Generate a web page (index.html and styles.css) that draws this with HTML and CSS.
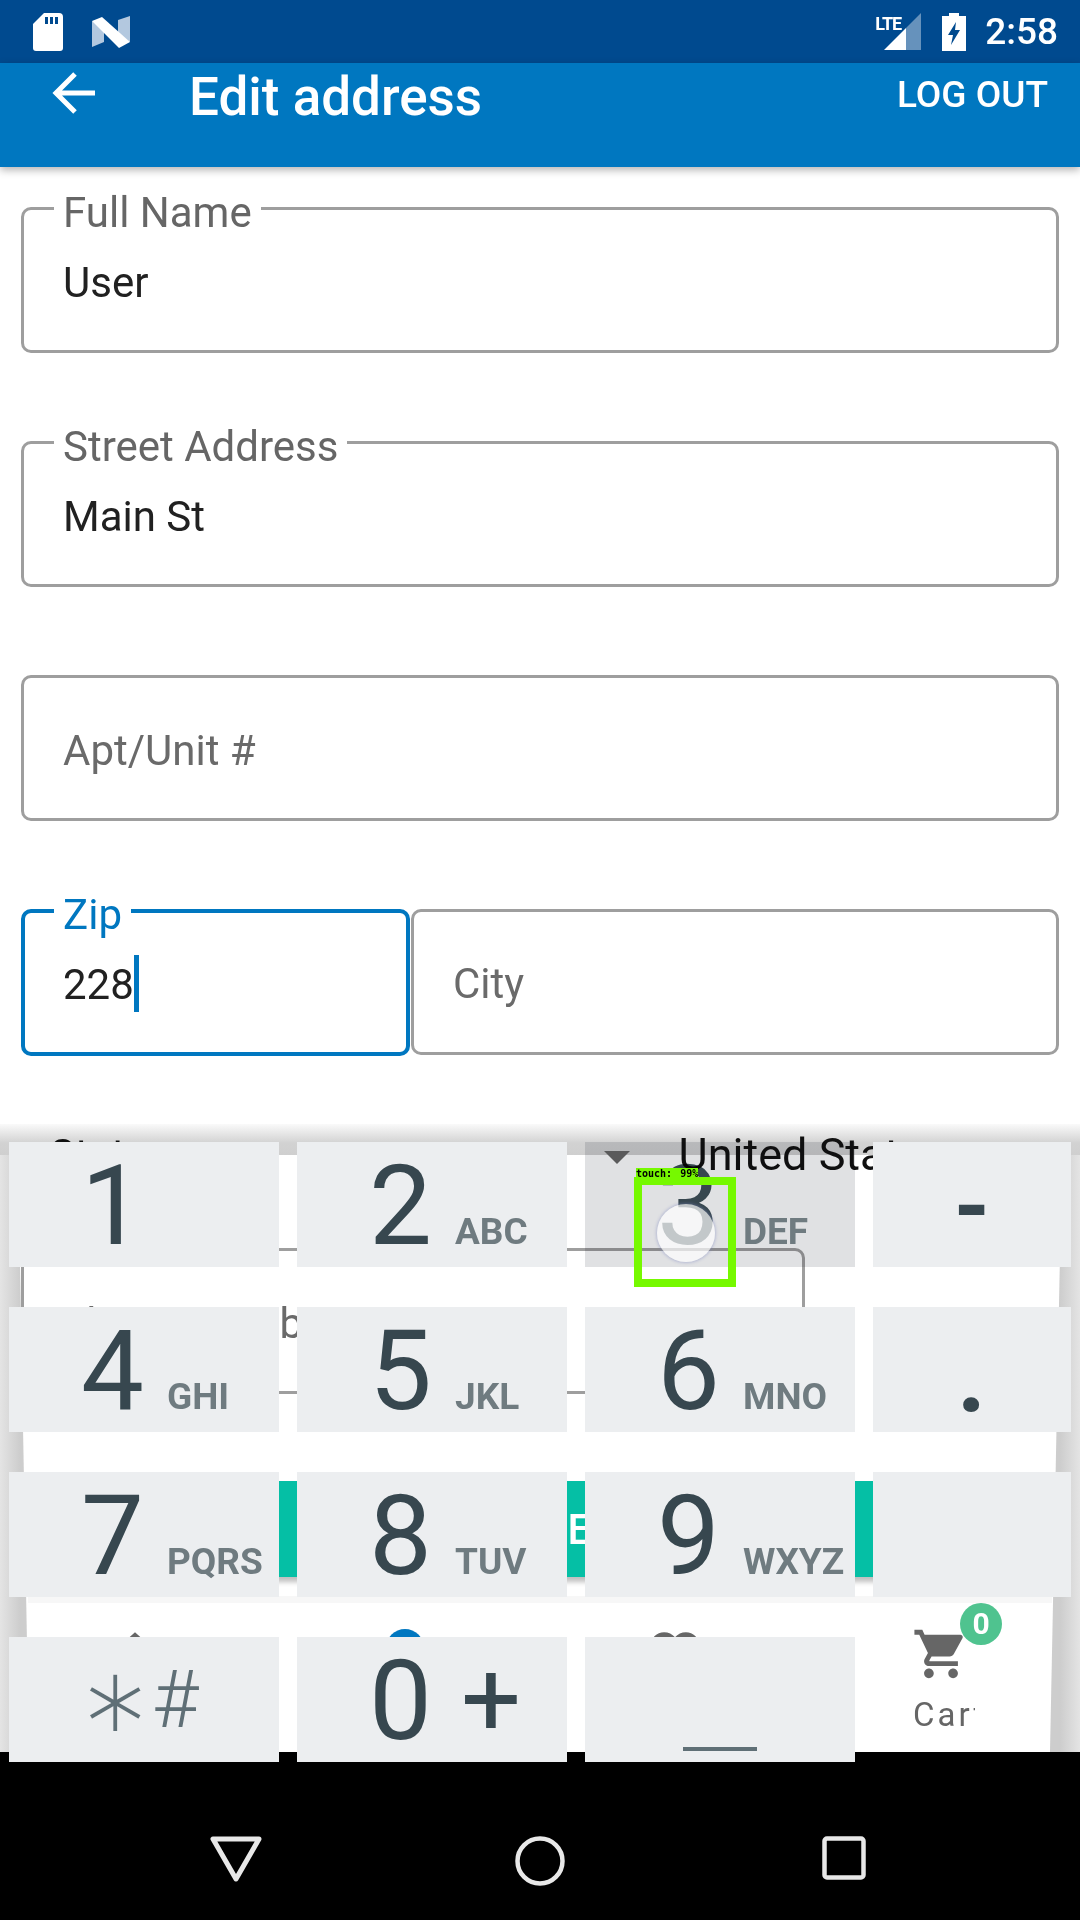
FILE: index.html
```html
<!DOCTYPE html>
<html lang="en">
<head>
    <meta charset="UTF-8">
    <meta name="viewport" content="width=device-width, initial-scale=1.0">
    <title>Edit address</title>
    <link rel="stylesheet" href="styles.css">
</head>
<body>
    <div class="screen">
        <div class="status-bar">
            <svg class="sd-icon" width="30" height="38" viewBox="0 0 30 38">
                <path fill="#fff" d="M11 0H26a4 4 0 0 1 4 4V35a3 3 0 0 1-3 3H3a3 3 0 0 1-3-3V11Z"/>
                <path fill="#004a8f" d="M12 4h3v7h-3zM17 4h3v7h-3zM22 4h3v7h-3z"/>
            </svg>
            <svg class="n-icon" width="38" height="32" viewBox="0 0 38 32">
                <path fill="#b3c8df" d="M0 5L12 11V26L0 31ZM38 0V26L26 20V4Z"/>
                <path fill="#fff" d="M0 5L10 1L38 26L27 32Z"/>
            </svg>
            <div class="status-right">
                <div class="network">
                    <span class="lte">LTE</span>
                    <svg width="37" height="37" viewBox="0 0 37 37">
                        <path fill="#fff" fill-opacity=".4" d="M37 0V37H22V15Z"/>
                        <path fill="#fff" d="M22 15V37H0Z"/>
                    </svg>
                </div>
                <svg class="battery" width="24" height="38" viewBox="0 0 24 38">
                    <path fill="#fff" fill-rule="evenodd" d="M7 0H17V3H24V38H0V3H7ZM14 9L6 22H11L9 32L18 17H13Z"/>
                </svg>
                <span class="clock">2:58</span>
            </div>
        </div>

        <header class="app-bar">
            <svg class="back" width="44" height="44" viewBox="0 0 44 44">
                <path fill="none" stroke="#fff" stroke-width="5" d="M43 21H5M23 2L4 21L23 40"/>
            </svg>
            <h1>Edit address</h1>
            <span class="logout">LOG OUT</span>
        </header>

        <main class="form">
            <div class="field">
                <label>Full Name</label>
                <span class="value">User</span>
            </div>
            <div class="field">
                <label>Street Address</label>
                <span class="value">Main St</span>
            </div>
            <div class="field">
                <span class="placeholder">Apt/Unit #</span>
            </div>
            <div class="field-row">
                <div class="field field-zip">
                    <label>Zip</label>
                    <span class="value">228</span><span class="caret"></span>
                </div>
                <div class="field field-city">
                    <span class="placeholder">City</span>
                </div>
            </div>
        </main>

        <section class="sheet">
            <div class="state-row">
                <span class="state-label">State</span>
                <span class="state-arrow"></span>
                <span class="state-value">United States</span>
            </div>
            <div class="field field-phone">
                <span class="placeholder">Phone Number</span>
            </div>
            <button class="save">SAVE</button>
            <nav class="tabs">
                <div class="tab">
                    <svg width="58" height="58" viewBox="0 0 24 24"><path fill="#666" d="M10 20v-6h4v6h5v-8h3L12 3 2 12h3v8z"/></svg>
                </div>
                <div class="tab">
                    <span class="tab-dot"></span>
                </div>
                <div class="tab">
                    <svg width="58" height="58" viewBox="0 0 24 24"><path fill="#666" d="M12 21.35l-1.45-1.32C5.4 15.36 2 12.28 2 8.5 2 5.42 4.42 3 7.5 3c1.74 0 3.41.81 4.5 2.09C13.09 3.81 14.76 3 16.5 3 19.58 3 22 5.42 22 8.5c0 3.78-3.4 6.86-8.55 11.54z"/></svg>
                </div>
                <div class="tab tab-cart">
                    <svg width="58" height="58" viewBox="0 0 24 24"><path fill="#666" d="M7 18c-1.1 0-2 .9-2 2s.9 2 2 2 2-.9 2-2-.9-2-2-2zM1 2v2h2l3.6 7.59-1.35 2.45c-.16.28-.25.61-.25.96 0 1.1.9 2 2 2h12v-2H7.42c-.14 0-.25-.11-.25-.25l.03-.12.9-1.63h7.45c.75 0 1.41-.41 1.75-1.03l3.58-6.49c.08-.14.12-.31.12-.48 0-.55-.45-1-1-1H5.21l-.94-2H1zm16 16c-1.1 0-1.99.9-1.99 2s.89 2 1.99 2 2-.9 2-2-.9-2-2-2z"/></svg>
                    <span class="badge">0</span>
                    <span class="tab-label">Cart</span>
                </div>
            </nav>
        </section>

        <footer class="nav-bar">
            <svg width="52" height="46" viewBox="0 0 52 46">
                <path fill="none" stroke="#e8e8e8" stroke-width="5" stroke-linejoin="round" d="M3 3H49L26 43Z"/>
            </svg>
            <svg width="50" height="50" viewBox="0 0 50 50">
                <circle cx="25" cy="25" r="22.5" fill="none" stroke="#e8e8e8" stroke-width="4.5"/>
            </svg>
            <svg width="44" height="44" viewBox="0 0 44 44">
                <rect x="2.5" y="2.5" width="39" height="39" rx="2.5" fill="none" stroke="#e8e8e8" stroke-width="4.5"/>
            </svg>
        </footer>

        <div class="keypad">
            <div class="key"><span class="digit">1</span></div>
            <div class="key"><span class="digit">2</span><span class="sub">ABC</span></div>
            <div class="key key-pressed"><span class="digit">3</span><span class="sub">DEF</span></div>
            <div class="key key-side"><span class="dash">-</span></div>
            <div class="key"><span class="digit">4</span><span class="sub">GHI</span></div>
            <div class="key"><span class="digit">5</span><span class="sub">JKL</span></div>
            <div class="key"><span class="digit">6</span><span class="sub">MNO</span></div>
            <div class="key key-side"><span class="dot">.</span></div>
            <div class="key"><span class="digit">7</span><span class="sub">PQRS</span></div>
            <div class="key"><span class="digit">8</span><span class="sub">TUV</span></div>
            <div class="key"><span class="digit">9</span><span class="sub">WXYZ</span></div>
            <div class="key key-side"></div>
            <div class="key key-symbols"><span class="star">∗</span><span class="hash">#</span></div>
            <div class="key"><span class="digit">0</span><span class="plus">+</span></div>
            <div class="key key-space"><span class="space-bar"></span></div>
        </div>

        <span class="ripple"></span>
        <div class="touch-box"><span class="touch-tag">touch: 99%</span></div>
    </div>
</body>
</html>
```

FILE: styles.css
```css
* {
    box-sizing: border-box;
}
body {
    margin: 0;
    font-family: Roboto, "Liberation Sans", sans-serif;
    background: #fff;
}
.screen {
    position: relative;
    width: 1080px;
    height: 1920px;
    overflow: hidden;
}

/* status bar */
.status-bar {
    height: 63px;
    background: #004a8f;
    display: flex;
    align-items: center;
    padding: 0 22px 0 33px;
    color: #fff;
}
.sd-icon {
    margin-right: 29px;
}
.status-right {
    margin-left: auto;
    display: flex;
    align-items: center;
}
.network {
    position: relative;
    width: 46px;
    height: 37px;
    display: flex;
    justify-content: flex-end;
    align-items: flex-end;
    margin-right: 21px;
}
.lte {
    position: absolute;
    left: 0;
    top: 0;
    font-size: 18px;
    font-weight: 700;
    letter-spacing: -1px;
}
.clock {
    margin-left: 19px;
    font-size: 37px;
    font-weight: 500;
}

/* app bar */
.app-bar {
    height: 104px;
    background: #0077c0;
    box-shadow: 0 3px 8px rgba(0, 0, 0, 0.3);
    color: #fff;
    display: flex;
    align-items: flex-start;
    padding: 9px 32px 0 52px;
    position: relative;
}
.app-bar h1 {
    margin: -2px 0 0 93px;
    font-size: 53px;
    font-weight: 500;
    line-height: 54px;
}
.logout {
    margin-left: auto;
    font-size: 37px;
    font-weight: 500;
    line-height: 46px;
}

/* form */
.form {
    padding: 40px 21px 0 21px;
    display: flex;
    flex-direction: column;
    gap: 88px;
}
.field {
    position: relative;
    height: 146px;
    border: 3px solid #9e9e9e;
    border-radius: 10px;
    padding: 5px 0 0 39px;
    display: flex;
    align-items: center;
    font-size: 42px;
    background: #fff;
}
.field label {
    position: absolute;
    left: 30px;
    top: -20px;
    padding: 0 9px;
    height: 40px;
    background: #fff;
    color: #666;
    line-height: 46px;
}
.value {
    color: #212121;
}
.placeholder {
    color: #6a6a6a;
}
.field-row {
    display: flex;
    gap: 1px;
}
.field-zip {
    width: 389px;
    height: 147px;
    border: 4px solid #0077c0;
    padding: 4px 0 0 38px;
}
.field-zip label {
    left: 29px;
    top: -21px;
    color: #0077c0;
}
.field-city {
    flex: 1;
    padding-top: 2px;
}
.caret {
    width: 5px;
    height: 57px;
    background: #0077c0;
    margin-bottom: 2px;
}

/* page sliding behind the keypad */
.sheet {
    position: relative;
    height: 628px;
    margin-top: 68px;
    background:
        linear-gradient(#fafafa, #d2d2d2 19px, #cfcfcf 31px) no-repeat 0 0 / 100% 31px,
        linear-gradient(to right, #e4e4e4, #cdcdcd 20px, #cdcdcd 1060px, #e4e4e4);
}
.sheet::before {
    content: "";
    position: absolute;
    inset: 31px 0 0 0;
    background: #fff;
    clip-path: polygon(18px 0, 1062px 0, 1050px 100%, 29px 100%);
}
.state-row {
    position: relative;
    height: 60px;
    display: flex;
    align-items: center;
    font-size: 42px;
    color: #111;
    padding-left: 50px;
}
.state-arrow {
    margin-left: 456px;
    border-left: 13px solid transparent;
    border-right: 13px solid transparent;
    border-top: 13px solid #666;
    margin-top: 6px;
}
.state-value {
    margin-left: 49px;
    font-size: 45px;
}
.field-phone {
    width: 784px;
    height: 146px;
    margin: 64px 0 0 21px;
    padding-left: 36px;
}
.save {
    position: relative;
    display: block;
    width: 1020px;
    height: 96px;
    margin: 87px 0 0 30px;
    border: none;
    border-radius: 4px;
    background: #05bfa5;
    color: #fff;
    font-family: inherit;
    font-size: 42px;
    font-weight: 500;
    box-shadow: 0 5px 5px rgba(0, 0, 0, 0.25);
}
.tabs {
    position: relative;
    height: 147px;
    margin-top: 26px;
    display: grid;
    grid-template-columns: repeat(4, 270px);
}
.tabs::before {
    content: "";
    position: absolute;
    left: 28px;
    right: 28px;
    top: -7px;
    height: 7px;
    background: #f7f7f7;
}
.tab {
    position: relative;
    display: flex;
    flex-direction: column;
    align-items: center;
    padding-top: 22px;
}
.tab-dot {
    width: 38px;
    height: 38px;
    margin-top: 4px;
    border-radius: 50%;
    background: #0077c0;
}
.tab-cart {
    padding-right: 8px;
}
.badge {
    position: absolute;
    left: 150px;
    top: 0;
    width: 42px;
    height: 42px;
    border-radius: 50%;
    background: #4fc38f;
    color: #fff;
    font-size: 30px;
    font-weight: 700;
    line-height: 42px;
    text-align: center;
}
.tab-label {
    width: 62px;
    margin: 12px 0 0 6px;
    overflow: hidden;
    white-space: nowrap;
    font-size: 33px;
    letter-spacing: 3px;
    color: #666;
}

/* nav bar */
.nav-bar {
    height: 169px;
    background: #000;
    position: relative;
    display: grid;
    grid-template-columns: repeat(3, 304px);
    padding: 84px 0 0 84px;
    align-items: start;
}
.nav-bar svg {
    justify-self: center;
}

/* keypad overlay */
.keypad {
    position: absolute;
    left: 9px;
    top: 1142px;
    display: grid;
    grid-template-columns: 270px 270px 270px 198px;
    grid-auto-rows: 125px;
    gap: 40px 18px;
}
.key {
    position: relative;
    background: #eceef0;
    color: #37474f;
    display: flex;
    align-items: baseline;
    padding-left: 72px;
    line-height: 125px;
}
.digit {
    width: 63px;
    font-size: 112px;
    line-height: 128px;
}
.sub {
    margin-left: 23px;
    font-size: 37px;
    font-weight: 700;
    color: #6f7b80;
}
.key-pressed {
    background: #e0e1e3;
    mix-blend-mode: multiply;
}
.key-side {
    padding: 0;
    justify-content: center;
}
.dash {
    font-size: 92px;
    font-weight: 700;
    line-height: 129px;
}
.dot {
    font-size: 100px;
    font-weight: 700;
    line-height: 139px;
    margin-left: -1px;
}
.ripple {
    position: absolute;
    left: 657px;
    top: 1204px;
    width: 58px;
    height: 58px;
    border-radius: 50%;
    background: rgba(255, 255, 255, 0.7);
    box-shadow: 0 0 3px 1px rgba(120, 130, 190, 0.4);
}
.key-symbols {
    padding-left: 66px;
    align-items: center;
    color: #5f6f76;
    font-size: 80px;
}
.star {
    width: 52px;
    font-family: "Liberation Sans", sans-serif;
    font-size: 96px;
    text-align: center;
    line-height: 122px;
    /* thins the glyph, the stroke takes the key colour */
    -webkit-text-stroke: 4px #eceef0;
}
.hash {
    margin-left: 25px;
    font-weight: 300;
    line-height: 122px;
}
.plus {
    align-self: flex-start;
    margin-left: 29px;
    font-size: 106px;
    line-height: 124px;
}
.key-space {
    padding: 0;
}
.space-bar {
    position: absolute;
    left: 98px;
    bottom: 11px;
    width: 74px;
    height: 4px;
    background: #5f6f76;
}

/* detection box drawn over the screenshot */
.touch-box {
    position: absolute;
    left: 634px;
    top: 1177px;
    width: 102px;
    height: 110px;
    border: 8px solid #76f900;
}
.touch-tag {
    position: absolute;
    left: -6px;
    top: -17px;
    width: 62px;
    height: 12px;
    background: #76f900;
    color: #000;
    font-family: "DejaVu Sans Mono", monospace;
    font-size: 10px;
    font-weight: 700;
    line-height: 12px;
    word-spacing: 2px;
    white-space: nowrap;
}
```
